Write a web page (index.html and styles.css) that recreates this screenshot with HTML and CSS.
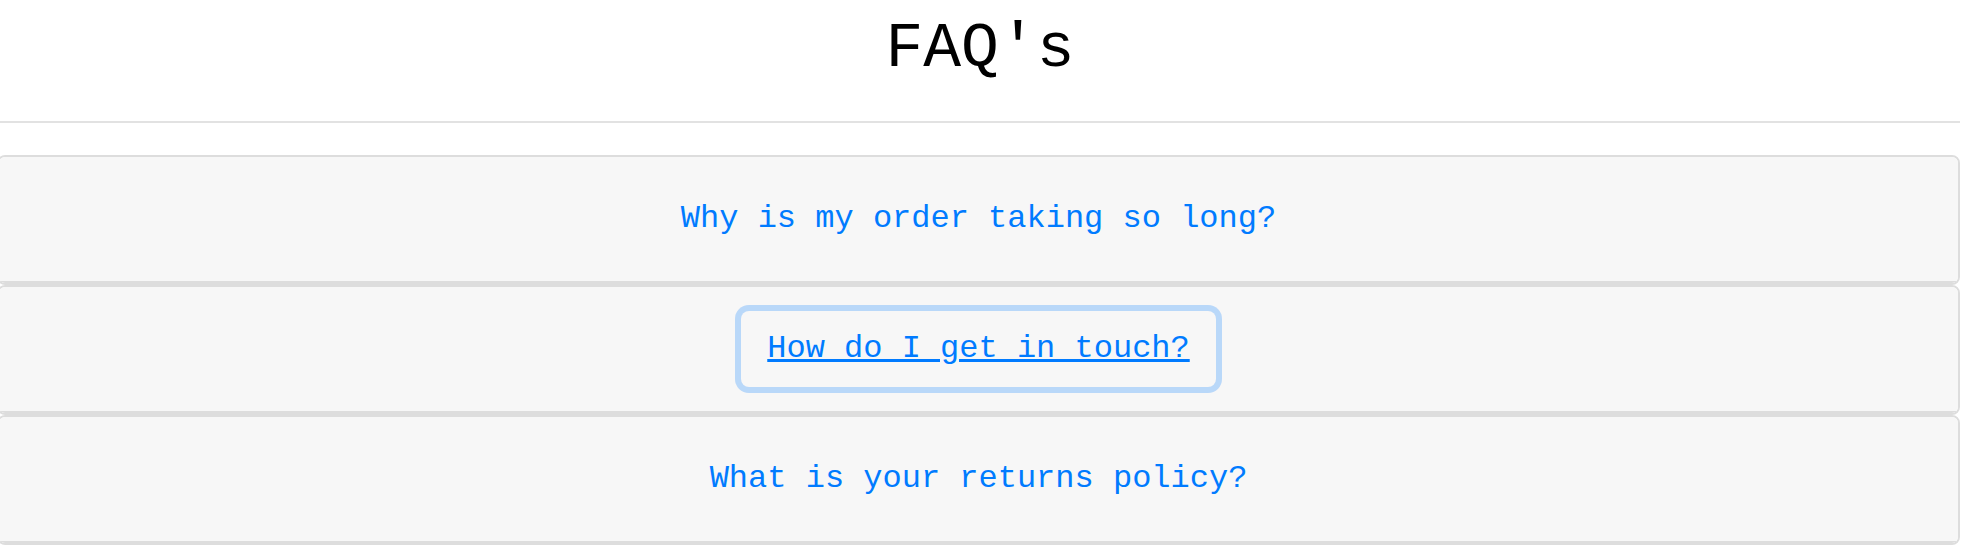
FILE: index.html
```html
<!DOCTYPE html>
<html lang="en">
<head>
<meta charset="utf-8">
<title>FAQ's</title>
<link rel="stylesheet" href="styles.css">
</head>
<body>
<div class="page">
  <h1 class="title">FAQ's</h1>
  <hr class="rule">
  <div class="accordion">
    <div class="card">
      <div class="card-header">
        <h2 class="card-title"><button class="btn-link" type="button">Why is my order taking so long?</button></h2>
      </div>
    </div>
    <div class="card">
      <div class="card-header">
        <h2 class="card-title"><button class="btn-link is-focused" type="button">How do I get in touch?</button></h2>
      </div>
    </div>
    <div class="card">
      <div class="card-header">
        <h2 class="card-title"><button class="btn-link" type="button">What is your returns policy?</button></h2>
      </div>
    </div>
  </div>
</div>
</body>
</html>
```
FILE: styles.css
```css
html, body {
  margin: 0;
  padding: 0;
  background: #ffffff;
}

body {
  font-family: "Liberation Mono", "DejaVu Sans Mono", monospace;
  color: #000;
  overflow: hidden;
}

.page {
  width: 1960px;
}

.title {
  margin: 0;
  padding-top: 11px;
  font-size: 63px;
  line-height: 77px;
  font-weight: normal;
  text-align: center;
}

.rule {
  margin: 33px 0 32px;
  border: 0;
  border-top: 2px solid #e2e2e2;
  height: 0;
}

.accordion {
  margin-left: -3px;
  width: 1963px;
}

.card {
  border: 2px solid #dddddd;
  border-radius: 8px;
  background: #fff;
  overflow: hidden;
}

.card-header {
  background: #f7f7f7;
  padding: 24px 40px;
  border-bottom: 2px solid #dddddd;
  text-align: center;
}

.card-title {
  margin: 0;
  font-size: 32px;
  font-weight: normal;
}

.btn-link {
  font-family: "Liberation Mono", "DejaVu Sans Mono", monospace;
  font-size: 32px;
  line-height: 48px;
  padding: 12px 24px;
  border: 2px solid transparent;
  border-radius: 8px;
  background: transparent;
  color: #007bff;
  cursor: pointer;
  outline: none;
}

.btn-link.is-focused {
  text-decoration: underline;
  text-decoration-thickness: 3px;
  box-shadow: 0 0 0 6px rgba(0, 123, 255, 0.25);
}
```
